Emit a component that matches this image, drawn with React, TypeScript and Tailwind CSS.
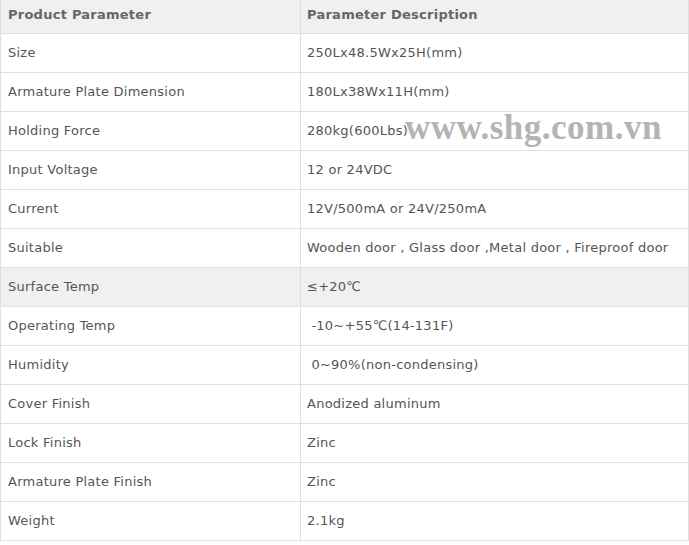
const rows: [string, string][] = [
  ["Size", "250Lx48.5Wx25H(mm)"],
  ["Armature Plate Dimension", "180Lx38Wx11H(mm)"],
  ["Holding Force", "280kg(600Lbs)"],
  ["Input Voltage", "12 or 24VDC"],
  ["Current", "12V/500mA or 24V/250mA"],
  ["Suitable", "Wooden door , Glass door ,Metal door , Fireproof door"],
  ["Surface Temp", "≤+20℃"],
  ["Operating Temp", " -10~+55℃(14-131F)"],
  ["Humidity", " 0~90%(non-condensing)"],
  ["Cover Finish", "Anodized aluminum"],
  ["Lock Finish", "Zinc"],
  ["Armature Plate Finish", "Zinc"],
  ["Weight", "2.1kg"],
]

export default function App() {
  return (
    <div className="relative w-[689px] h-[545px] bg-white font-['DejaVu_Sans',Verdana,sans-serif] text-[13px] tracking-[0.25px] text-[#555]">
      <table className="w-[689px] border-collapse table-fixed">
        <colgroup>
          <col className="w-[300px]" />
          <col />
        </colgroup>
        <thead>
          <tr className="h-[33px] bg-[#f0f0f0]">
            <th className="border border-[#e0e0e0] border-t-0 pl-[7px] pb-[4px] text-left font-bold text-[#666]">Product Parameter</th>
            <th className="border border-[#e0e0e0] border-t-0 pl-[6px] pb-[4px] text-left font-bold text-[#666]">Parameter Description</th>
          </tr>
        </thead>
        <tbody>
          {rows.map(([name, value]) => (
            <tr key={name} className={`h-[39px] ${name === "Surface Temp" ? "bg-[#f0f0f0]" : ""}`}>
              <td className="border border-[#e0e0e0] pl-[7px]">{name}</td>
              <td className="border border-[#e0e0e0] pl-[6px] whitespace-pre">{value}</td>
            </tr>
          ))}
        </tbody>
      </table>
      {/* watermark */}
      <div className="absolute left-[405px] top-[110px] font-['Liberation_Serif',serif] font-bold text-[35px] text-[#b4b4b4] leading-none tracking-[0.5px]">
        www.shg.com.vn
      </div>
    </div>
  )
}
